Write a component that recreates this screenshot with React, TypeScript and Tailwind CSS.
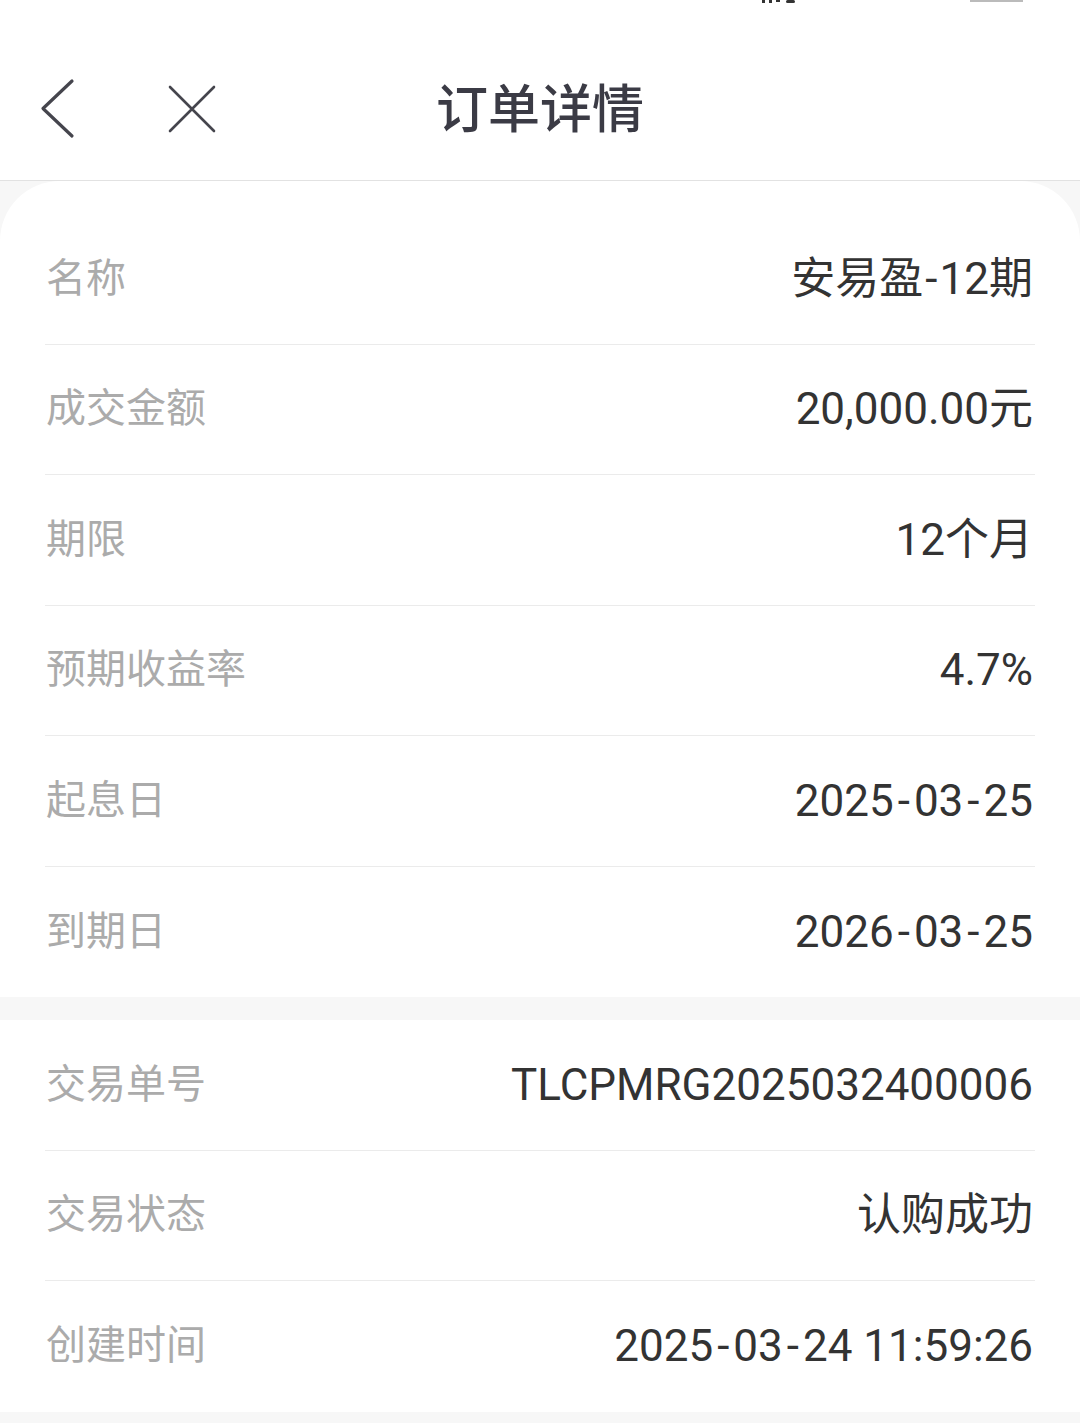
import React from "react";

const font = { fontFamily: "Roboto, 'Noto Sans CJK SC', sans-serif" };

type Row = { label: string; value: string };

const card1: Row[] = [
  { label: "名称", value: "安易盈-12期" },
  { label: "成交金额", value: "20,000.00元" },
  { label: "期限", value: "12个月" },
  { label: "预期收益率", value: "4.7%" },
  { label: "起息日", value: "2025-03-25" },
  { label: "到期日", value: "2026-03-25" },
];

const card2: Row[] = [
  { label: "交易单号", value: "TLCPMRG2025032400006" },
  { label: "交易状态", value: "认购成功" },
  { label: "创建时间", value: "2025-03-24 11:59:26" },
];

function Value({ text }: { text: string }) {
  const parts = text.split("-");
  return (
    <span className="text-[44px] leading-none text-[#333333] whitespace-pre">
      {parts.map((p, i) => (
        <React.Fragment key={i}>
          {i > 0 && (
            <span className={/[0-9]$/.test(parts[i - 1]) ? "px-[4px]" : "px-[2px]"}>-</span>
          )}
          {p}
        </React.Fragment>
      ))}
    </span>
  );
}

function Rows({ rows }: { rows: Row[] }) {
  return (
    <div className="mx-[45px] flex flex-col">
      {rows.map((r, i) => (
        <div
          key={r.label}
          className={
            "h-[130.5px] flex items-center justify-between pl-[1px] pr-[2px] " +
            (i < rows.length - 1 ? "border-b border-[#ebebeb]" : "")
          }
        >
          <span className="text-[40px] leading-none text-[#ababab]">{r.label}</span>
          <Value text={r.value} />
        </div>
      ))}
    </div>
  );
}

export default function App() {
  return (
    <div className="w-[1080px] h-[1423px] bg-[#f7f7f7] overflow-hidden" style={font}>
      <div className="relative bg-white h-[181px] border-b border-[#e2e2e2]">
        <svg className="absolute left-[760px] top-0" width="40" height="4" viewBox="0 0 40 4">
          <rect x="2" y="0" width="3" height="3" fill="#333" />
          <rect x="9" y="0" width="3" height="3" fill="#333" />
          <rect x="16" y="0" width="4" height="2" fill="#333" />
          <rect x="26" y="0" width="9" height="3" rx="1.5" fill="#333" />
        </svg>
        <div className="absolute left-[970px] top-0 w-[53px] h-[2px] bg-[#bbbbbb]" />
        <div className="pt-[36px] h-[180px]">
          <div className="relative h-[144px] flex items-center justify-center">
            <svg className="absolute left-[40px] top-[42px]" width="36" height="62" viewBox="0 0 36 62" fill="none">
              <path d="M32 3 L3 30.5 L32 58" stroke="#45454d" strokeWidth="3.2" strokeLinecap="round" strokeLinejoin="round" />
            </svg>
            <svg className="absolute left-[166px] top-[47px]" width="52" height="52" viewBox="0 0 52 52" fill="none">
              <path d="M4 4 L48 48 M48 4 L4 48" stroke="#45454d" strokeWidth="2.6" strokeLinecap="round" />
            </svg>
            <span className="text-[52px] leading-none text-[#3b3b45] font-medium mt-[6px]">订单详情</span>
          </div>
        </div>
      </div>
      <div className="bg-white rounded-t-[60px] pt-[33px]">
        <Rows rows={card1} />
      </div>
      <div className="bg-white mt-[23px]">
        <Rows rows={card2} />
      </div>
    </div>
  );
}
